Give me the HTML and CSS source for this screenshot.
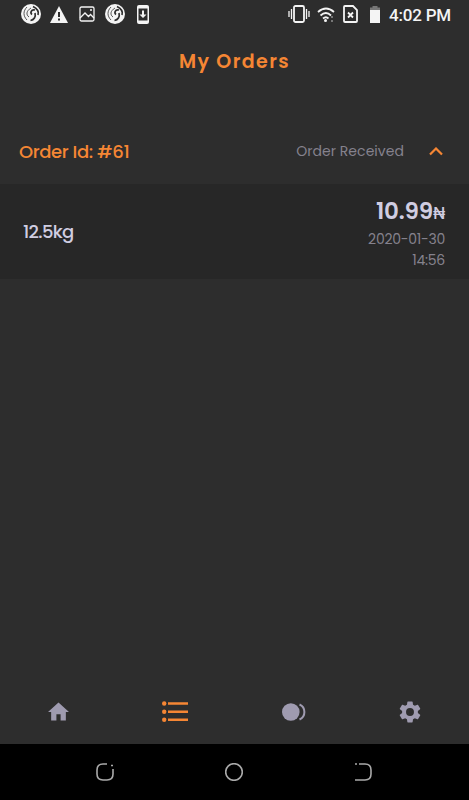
FILE: index.html
```
<!DOCTYPE html>
<html lang="en">
<head>
	<meta charset="UTF-8">
	<title>My Orders</title>
	<link rel="stylesheet" href="styles.css">
</head>
<body>
	<div class="phone">
		<div class="status">
			<svg class="s-bird" viewBox="0 0 20 20"><circle cx="10" cy="10" r="10"/><path class="cut" d="M6 3C2 7 2 12 6 16M10 4C5 7 5 11 8 13"/><path class="cut wide" d="M12 2.500C17 5 18 8 17 11M14 6C10 5 9 9 11 10.500M14 9C15 13 13 16 9.500 16.500"/></svg>
			<svg class="s-warn" viewBox="0 0 18 17"><path d="M9 0L18 17H0z"/><path class="cut" d="M9 6v5M9 12.500v2"/></svg>
			<svg class="s-img" viewBox="0 0 16 16"><rect class="line" x="1" y="1" width="14" height="14" rx="1.500"/><path class="line" d="M1 12l5-5 3.500 3.500 2-2 3.500 3.500"/><circle cx="12" cy="4" r="1"/></svg>
			<svg class="s-bird" viewBox="0 0 20 20"><circle cx="10" cy="10" r="10"/><path class="cut" d="M6 3C2 7 2 12 6 16M10 4C5 7 5 11 8 13"/><path class="cut wide" d="M12 2.500C17 5 18 8 17 11M14 6C10 5 9 9 11 10.500M14 9C15 13 13 16 9.500 16.500"/></svg>
			<svg class="s-load" viewBox="0 0 12 19"><rect width="12" height="19" rx="2"/><path class="hole" d="M1.500 3.500h9v12h-9z"/><path d="M5 5.500h2v4h2.500L6 13 2.500 9.500H5z"/></svg>
			<div class="space"></div>
			<svg class="s-vib" viewBox="0 0 22 18"><rect class="line thick" x="6" y="1" width="10" height="16" rx="1.500"/><path class="line" d="M3.500 4v10M1 6v6M18.500 4v10M21 6v6"/></svg>
			<svg class="s-wifi" viewBox="0 0 18 15"><path class="line thick" d="M1 5Q9-2 17 5M3.500 8.500Q9 3.500 14 8.500M6 11.500Q9 9 11.500 11.500"/><circle cx="8.500" cy="13.500" r="1.500"/><path class="dim" d="M14 9h2v2h-2zM14 13h2v2h-2z"/></svg>
			<svg class="s-sim" viewBox="0 0 15 18"><path class="line thick" d="M2 1h8l4 4v11q0 1-1 1H2q-1 0-1-1V2q0-1 1-1z"/><path class="line thick" d="M5 7.500l5 5M10 7.500l-5 5"/></svg>
			<svg class="s-bat" viewBox="0 0 10 17"><path class="dim" d="M2.500 0h5v1.500H10V5H0V1.500h2.500z"/><path d="M0 4h10v13H0z"/></svg>
			<span class="clock">4:02 PM</span>
		</div>
		<h1 class="title">My Orders</h1>
		<div class="order">
			<span class="order-id">Order Id: #61</span>
			<span class="order-state">Order Received</span>
			<svg class="chevron" viewBox="0 0 14 9"><path d="M1 7.500l6-6 6 6"/></svg>
		</div>
		<div class="detail">
			<span class="weight">12.5kg</span>
			<div class="info">
				<div class="price">10.99<span class="naira">₦</span></div>
				<div class="date">2020-01-30</div>
				<div class="date">14:56</div>
			</div>
		</div>
		<div class="tabs">
			<div class="tab"><svg class="i-home" viewBox="2 3 20 17"><path d="M10 20v-6h4v6h5v-8h3L12 3 2 12h3v8z"/></svg></div>
			<div class="tab on"><svg class="i-list" viewBox="0 0 26 21"><circle cx="2.200" cy="2.500" r="2.200"/><circle cx="2.200" cy="10.700" r="2.200"/><circle cx="2.200" cy="18.700" r="2.200"/><path d="M6 1.200h20v2.600H6zM6 9.400h20V12H6zM6 17.400h20V20H6z"/></svg></div>
			<div class="tab"><svg class="i-coin" viewBox="0 0 24 18"><circle cx="8.800" cy="9" r="8.800"/><path class="arc" d="M17.500 1.500a8.200 8.200 0 0 1 0 15"/></svg></div>
			<div class="tab"><svg class="i-gear" viewBox="2 2 20 20"><path d="M19.140 12.940c.04-.3.06-.61.06-.94 0-.32-.02-.64-.07-.94l2.030-1.580c.18-.14.23-.41.12-.61l-1.920-3.320c-.12-.22-.37-.29-.59-.22l-2.390.96c-.5-.38-1.030-.7-1.620-.94L14.400 2.810c-.04-.24-.24-.41-.48-.41h-3.840c-.24 0-.43.17-.47.41l-.36 2.540c-.59.24-1.130.57-1.620.94l-2.390-.96c-.22-.08-.47 0-.59.22L2.740 8.870c-.12.21-.08.47.12.61l2.030 1.580c-.05.3-.09.63-.09.94s.02.64.07.94l-2.030 1.580c-.18.14-.23.41-.12.61l1.920 3.320c.12.22.37.29.59.22l2.390-.96c.5.38 1.030.7 1.620.94l.36 2.540c.05.24.24.41.48.41h3.840c.24 0 .44-.17.47-.41l.36-2.540c.59-.24 1.130-.56 1.620-.94l2.390.96c.22.08.47 0 .59-.22l1.920-3.320c.12-.22.07-.47-.12-.61zM12 15.600a3.600 3.600 0 1 1 0-7.200 3.600 3.600 0 0 1 0 7.200z"/></svg></div>
		</div>
		<div class="keys">
			<svg viewBox="0 0 18 18"><path d="M11 1H7Q1 1 1 7v4q0 6 6 6h4q6 0 6-6V6"/><path d="M15 2.500h2"/></svg>
			<svg viewBox="0 0 18 18"><circle cx="9" cy="9" r="8.300"/></svg>
			<svg viewBox="0 0 18 18"><path d="M5 1h6q6 0 6 6v4q0 6-6 6H1"/><path d="M1 1h2"/></svg>
		</div>
	</div>
</body>
</html>
```
FILE: styles.css
```
*{
	box-sizing: border-box;
	margin: 0;
	padding: 0;
}
body{
	background-color: #2d2d2d;
	font-family: Poppins, Inter, "Liberation Sans", sans-serif;
}
svg{
	display: block;
	flex: none;
}
.phone{
	display: flex;
	flex-direction: column;
	width: 469px;
	height: 800px;
	overflow: hidden;
}
/* status bar */
.status{
	display: flex;
	align-items: center;
	height: 28px;
	padding: 0 19px 0 21px;
	fill: #f4f4f4;
}
.status .line{
	fill: none;
	stroke: #f4f4f4;
	stroke-width: 1.3;
}
.status .thick{
	stroke-width: 1.8;
}
.status .cut{
	fill: none;
	stroke: #2d2d2d;
	stroke-width: 0.8;
}
.status .wide{
	stroke-width: 1.7;
}
.status .hole{
	fill: #2d2d2d;
}
.status .dim{
	fill: #777;
}
.space{
	flex: 1;
}
.s-bird{
	width: 20px;
	height: 20px;
}
.s-warn{
	width: 18px;
	height: 17px;
	margin: 0 11px 0 9px;
}
.status .s-warn .cut{
	stroke-width: 2;
}
.s-img{
	width: 16px;
	height: 16px;
	margin-right: 10px;
}
.s-load{
	width: 12px;
	height: 19px;
	margin-left: 12px;
}
.s-vib{
	width: 22px;
	height: 18px;
	margin-right: 7px;
}
.s-wifi{
	width: 18px;
	height: 15px;
	margin-right: 8px;
}
.s-sim{
	width: 15px;
	height: 18px;
	margin-right: 12px;
}
.s-bat{
	width: 10px;
	height: 17px;
	margin-right: 9px;
}
.clock{
	width: 61px;
	padding-top: 1px;
	color: #f4f4f4;
	font: 500 17px Roboto, sans-serif;
	letter-spacing: -0.2px;
	white-space: nowrap;
}
.title{
	height: 91px;
	padding-top: 21px;
	color: #f58634;
	font-size: 19px;
	font-weight: 600;
	line-height: 26px;
	letter-spacing: 1.4px;
	text-align: center;
}
.order{
	display: flex;
	align-items: center;
	height: 65px;
	padding: 0 26px 0 19px;
	color: #f58634;
}
.order-id{
	flex: 1;
	font-size: 18px;
	font-weight: 500;
	letter-spacing: -0.4px;
}
.order-state{
	margin-right: 25px;
	color: #85828d;
	font-size: 14px;
	letter-spacing: 0.05px;
}
.chevron{
	width: 14px;
	height: 9px;
	fill: none;
	stroke: #f58634;
	stroke-width: 2.2;
}
.detail{
	display: flex;
	align-items: center;
	justify-content: space-between;
	height: 95px;
	padding: 0 24px 0 23px;
	background-color: #272727;
}
.weight{
	color: #d0cde1;
	font-size: 18px;
	font-weight: 500;
	letter-spacing: -0.7px;
}
.info{
	padding-top: 1px;
	text-align: right;
}
.price{
	padding-top: 2px;
	color: #d0cde1;
	font-size: 23px;
	font-weight: 600;
	line-height: 30px;
	letter-spacing: -0.2px;
}
.naira{
	font-size: 16px;
	font-weight: 500;
}
.date{
	color: #85828d;
	font-size: 14px;
	line-height: 21px;
	letter-spacing: -0.25px;
}
/* bottom tabs */
.tabs{
	display: flex;
	justify-content: space-between;
	align-items: center;
	height: 65px;
	margin-top: auto;
	padding: 0 48px;
	fill: #9f9bb0;
}
.on{
	fill: #f58634;
}
.i-home{
	width: 21px;
	height: 19px;
}
.i-list{
	width: 26px;
	height: 21px;
}
.i-coin{
	width: 24px;
	height: 18px;
}
.i-gear{
	width: 22px;
	height: 22px;
}
.arc{
	fill: none;
	stroke: #9f9bb0;
	stroke-width: 2;
}
.keys{
	display: flex;
	justify-content: space-between;
	align-items: center;
	height: 56px;
	padding: 0 97px 0 96px;
	background-color: #000;
}
.keys svg{
	width: 18px;
	height: 18px;
	fill: none;
	stroke: #aaa;
	stroke-width: 1.6;
}
```
